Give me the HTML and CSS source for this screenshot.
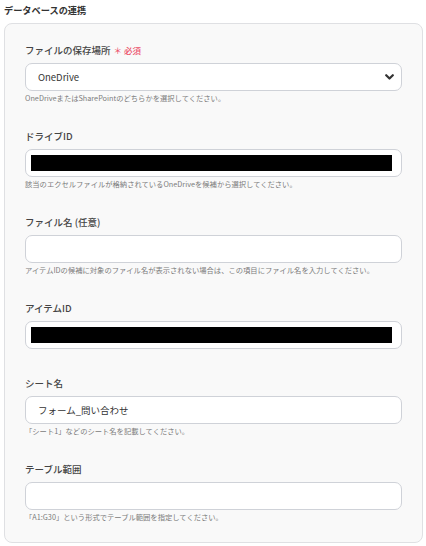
FILE: index.html
```html
<!DOCTYPE html>
<html lang="ja">
<head>
<meta charset="utf-8">
<link rel="stylesheet" href="styles.css">
</head>
<body>
<h2 class="title">データベースの連携</h2>
<div class="card">
  <div class="field">
    <div class="label">ファイルの保存場所<span class="req">＊ 必須</span></div>
    <div class="input select">
      <span class="value">OneDrive</span>
      <svg class="chev" width="9" height="6" viewBox="0 0 9 6"><path d="M1.2 1.2 L4.5 4.5 L7.8 1.2" fill="none" stroke="#333" stroke-width="2.2" stroke-linecap="round" stroke-linejoin="round"/></svg>
    </div>
    <div class="help">OneDriveまたはSharePointのどちらかを選択してください。</div>
  </div>
  <div class="field">
    <div class="label">ドライブID</div>
    <div class="input"><div class="mask"></div></div>
    <div class="help">該当のエクセルファイルが格納されているOneDriveを候補から選択してください。</div>
  </div>
  <div class="field">
    <div class="label">ファイル名 (任意)</div>
    <div class="input"></div>
    <div class="help">アイテムIDの候補に対象のファイル名が表示されない場合は、この項目にファイル名を入力してください。</div>
  </div>
  <div class="field">
    <div class="label">アイテムID</div>
    <div class="input"><div class="mask"></div></div>
  </div>
  <div class="field">
    <div class="label">シート名</div>
    <div class="input"><span class="value">フォーム_問い合わせ</span></div>
    <div class="help">「シート1」などのシート名を記載してください。</div>
  </div>
  <div class="field">
    <div class="label">テーブル範囲</div>
    <div class="input"></div>
    <div class="help">「A1:G30」という形式でテーブル範囲を指定してください。</div>
  </div>
</div>
</body>
</html>
```
FILE: styles.css
```css
* { box-sizing: border-box; }
body {
  margin: 0;
  background: #fff;
  font-family: "Noto Sans CJK JP", "Noto Sans", sans-serif;
  color: #333;
}
.title {
  margin: 0;
  padding: 3px 0 0 4px;
  height: 23px;
  font-size: 9.2px;
  line-height: 14px;
  font-weight: 700;
  color: #333;
}
.card {
  margin-left: 4px;
  width: 419px;
  height: 520px;
  background: #f9f9f9;
  border: 1px solid #dfe0e3;
  border-radius: 8px;
  padding: 19px 20px 0 20px;
}
.field {
  display: flex;
  flex-direction: column;
  margin-bottom: 27px;
}
.label {
  height: 14px;
  line-height: 14px;
  font-size: 9.5px;
  font-weight: 500;
  color: #444;
  margin-bottom: 6px;
  white-space: nowrap;
}
.req {
  color: #ec4f6a;
  font-size: 8.5px;
  font-weight: 500;
  margin-left: 3px;
}
.input {
  height: 28px;
  background: #fff;
  border: 1px solid #cfd2d8;
  border-radius: 7px;
  display: flex;
  align-items: center;
  padding: 0 9px 0 5px;
}
.value {
  font-size: 9.5px;
  color: #333;
  padding-left: 7px;
}
.select { justify-content: space-between; padding-right: 7px; }
.chev { display: block; }
.mask {
  flex: 1;
  height: 16px;
  background: #000;
}
.help {
  margin-top: 3px;
  height: 8px;
  line-height: 8px;
  font-size: 7.3px;
  color: #7b7b7b;
  white-space: nowrap;
}
```
